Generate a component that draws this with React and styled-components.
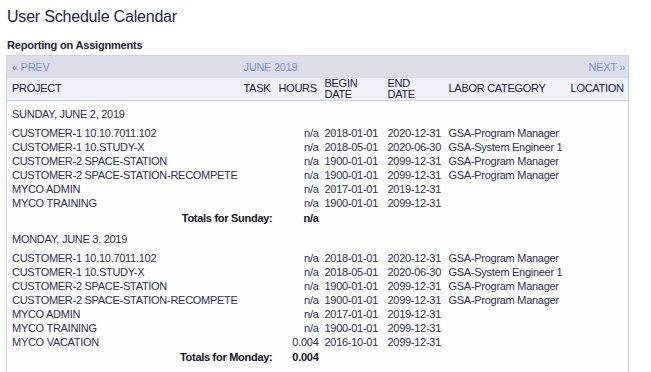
import React from 'react'
import styled, { createGlobalStyle } from 'styled-components'

const GlobalStyle = createGlobalStyle`
  html, body {
    margin: 0;
    padding: 0;
    background: #ffffff;
  }
  body {
    font-family: "Liberation Sans", Arial, sans-serif;
  }
`

const Page = styled.div`
  padding: 7px 0 0 6px;
  width: 622px;
`

const Title = styled.h1`
  margin: 0 0 0 1px;
  font-size: 16px;
  font-weight: normal;
  line-height: 20px;
  color: #1d1d4d;
  letter-spacing: -0.2px;
`

const SubTitle = styled.h2`
  margin: 11px 0 3px 1px;
  font-size: 11px;
  font-weight: bold;
  line-height: 14px;
  color: #222233;
  letter-spacing: -0.2px;
`

const Table = styled.table`
  width: 622px;
  table-layout: fixed;
  border-collapse: collapse;
  border: 1px solid #cfd0d8;
  background: #fefefe;
  font-size: 11px;
  letter-spacing: -0.28px;
  color: #2f2f4f;
`

const NavRow = styled.tr`
  background: #dcdde9;
  height: 22px;
`

const NavCell = styled.td`
  padding: 0 3px 0 ${p => (p.$first ? '5px' : '3px')};
  color: #7b97d6;
  text-align: ${p => p.$align || 'left'};
  vertical-align: middle;
  line-height: 14px;
`

const HeadRow = styled.tr`
  background: #f0f0f9;
  border-bottom: 1px solid #cfd0d8;
  height: 22px;
`

const HeadCell = styled.th`
  padding: 0 3px 0 ${p => (p.$first ? '5px' : '3px')};
  font-weight: normal;
  text-align: left;
  vertical-align: middle;
  line-height: 11px;
  color: #222233;
`

const DayCell = styled.td`
  padding: 6px 3px 5px 5px;
  line-height: 14px;
  color: #2f2f4f;
`

const Cell = styled.td`
  padding: 0 3px 0 ${p => (p.$first ? '5px' : '3px')};
  line-height: 14px;
  height: 14px;
  text-align: ${p => p.$align || 'left'};
  white-space: nowrap;
`

const TotalCell = styled.td`
  padding: 0 3px ${p => (p.$last ? '24px' : '0')};
  line-height: 16px;
  font-weight: bold;
  color: #111122;
  vertical-align: top;
  text-align: ${p => p.$align || 'left'};
`

const rowsBase = [
  ['CUSTOMER-1 10.10.7011.102', 'n/a', '2018-01-01', '2020-12-31', 'GSA-Program Manager'],
  ['CUSTOMER-1 10.STUDY-X', 'n/a', '2018-05-01', '2020-06-30', 'GSA-System Engineer 1'],
  ['CUSTOMER-2 SPACE-STATION', 'n/a', '1900-01-01', '2099-12-31', 'GSA-Program Manager'],
  ['CUSTOMER-2 SPACE-STATION-RECOMPETE', 'n/a', '1900-01-01', '2099-12-31', 'GSA-Program Manager'],
  ['MYCO ADMIN', 'n/a', '2017-01-01', '2019-12-31', ''],
  ['MYCO TRAINING', 'n/a', '1900-01-01', '2099-12-31', ''],
]

const days = [
  { label: 'SUNDAY, JUNE 2, 2019', name: 'Sunday', total: 'n/a', rows: rowsBase },
  {
    label: 'MONDAY, JUNE 3, 2019',
    name: 'Monday',
    total: '0.004',
    rows: [...rowsBase, ['MYCO VACATION', '0.004', '2016-10-01', '2099-12-31', '']],
  },
]

const DaySection = ({ day, last }) => (
  <>
    <tr>
      <DayCell colSpan={7}>{day.label}</DayCell>
    </tr>
    {day.rows.map((r, i) => (
      <tr key={i}>
        <Cell $first>{r[0]}</Cell>
        <Cell></Cell>
        <Cell $align="right">{r[1]}</Cell>
        <Cell>{r[2]}</Cell>
        <Cell>{r[3]}</Cell>
        <Cell>{r[4]}</Cell>
        <Cell></Cell>
      </tr>
    ))}
    <tr>
      <TotalCell $last={last} colSpan={2} $align="right">Totals for {day.name}:</TotalCell>
      <TotalCell $last={last} $align="right">{day.total}</TotalCell>
      <TotalCell $last={last} colSpan={4}></TotalCell>
    </tr>
  </>
)

const App = () => {
  return (
    <Page>
      <GlobalStyle />
      <Title>User Schedule Calendar</Title>
      <SubTitle>Reporting on Assignments</SubTitle>
      <Table>
        <colgroup>
          <col style={{ width: 234 }} />
          <col style={{ width: 35 }} />
          <col style={{ width: 46 }} />
          <col style={{ width: 63 }} />
          <col style={{ width: 61 }} />
          <col style={{ width: 122 }} />
          <col style={{ width: 61 }} />
        </colgroup>
        <thead>
          <NavRow>
            <NavCell $first>« PREV</NavCell>
            <NavCell colSpan={5}>JUNE 2019</NavCell>
            <NavCell $align="right">NEXT »</NavCell>
          </NavRow>
          <HeadRow>
            <HeadCell $first>PROJECT</HeadCell>
            <HeadCell>TASK</HeadCell>
            <HeadCell>HOURS</HeadCell>
            <HeadCell>BEGIN<br />DATE</HeadCell>
            <HeadCell>END<br />DATE</HeadCell>
            <HeadCell>LABOR CATEGORY</HeadCell>
            <HeadCell>LOCATION</HeadCell>
          </HeadRow>
        </thead>
        <tbody>
          {days.map((d, i) => (
            <DaySection key={d.name} day={d} last={i === days.length - 1} />
          ))}
        </tbody>
      </Table>
    </Page>
  )
}

export default App
